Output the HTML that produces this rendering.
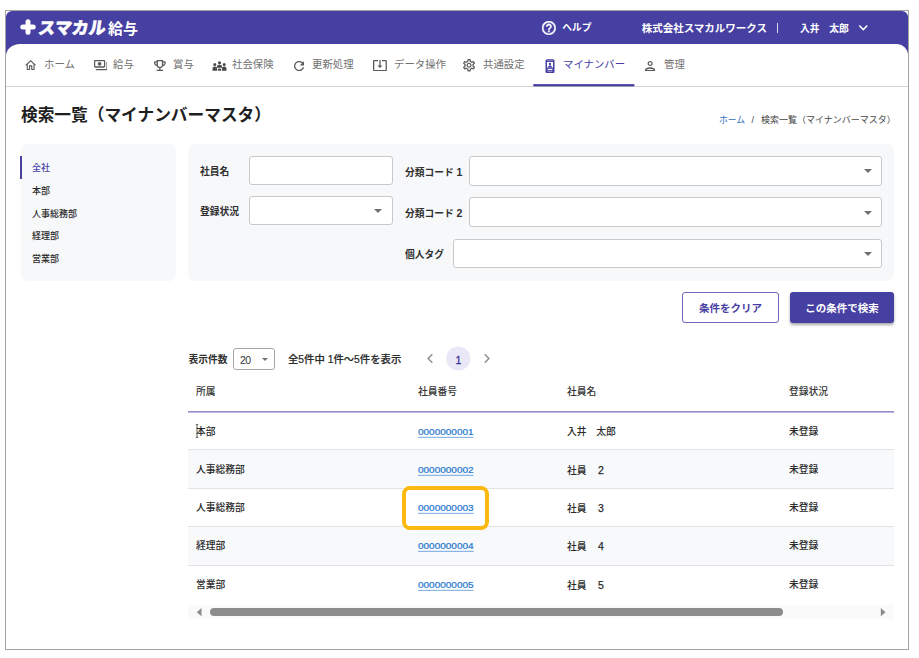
<!DOCTYPE html>
<html lang="ja">
<head>
<meta charset="utf-8">
<title>検索一覧（マイナンバーマスタ）</title>
<style>
*{box-sizing:border-box;margin:0;padding:0}
html,body{width:919px;height:658px;background:#fff;overflow:hidden}
body{font-family:"Liberation Sans","Noto Sans CJK JP",sans-serif;color:#222;position:relative}
.abs{position:absolute}
#frame{position:absolute;left:5px;top:10px;width:904px;height:640px;border:1px solid #a3a3a3;background:#fff;overflow:hidden}
/* coordinates inside #app are page coordinates */
#app{position:absolute;left:-6px;top:-11px;width:919px;height:658px}
#hdr{position:absolute;left:6px;top:11px;width:902px;height:60px;background:#4740a3;border-radius:6px 6px 0 0}
#content{position:absolute;left:6px;top:44px;width:902px;height:606px;background:#fff;border-radius:14px 12px 0 0 / 12px 11px 0 0}
.t{position:absolute;white-space:nowrap;line-height:1}
.hw{color:#fff;font-weight:700;font-size:10.5px}
#logo1{left:37.400px;top:19.500px;font-size:17px;font-weight:900;color:#fff;transform:skewX(-8deg);transform-origin:0 100%;-webkit-text-stroke:.5px #fff;letter-spacing:0px}
#logo2{left:108px;top:20.5px;font-size:15px;font-weight:700;color:#fff}
.nav{color:#707070;font-size:10.400px;top:60.300px}
.nav.act{color:#4740a3}
#navline{position:absolute;left:6px;top:86px;width:902px;height:1px;background:#d6d6d6}
#title{left:21px;top:108px;font-size:16.7px;font-weight:700;color:#1f1f1f}
.bc{font-size:9px;top:115.500px;color:#444}
.panel{position:absolute;background:#f7f8fa;border-radius:7px}
.side{font-size:9px;font-weight:500;left:32px;color:#2a2a2a}
.lbl{font-size:9.75px;font-weight:700;color:#303030;margin-top:.7px}
.dg{font-size:10.5px}
.dg2{margin-left:1.800px;font-size:10.500px;font-weight:400;-webkit-text-stroke:.25px #2a2a2a}
.inp{position:absolute;background:#fff;border:1px solid #c9c9c9;border-radius:3px}
.arrow{position:absolute;width:0;height:0;border-left:4px solid transparent;border-right:4px solid transparent;border-top:4px solid #707070}
.btn{position:absolute;border-radius:3px;font-size:10.5px;font-weight:700;text-align:center;line-height:29px;height:31px;white-space:nowrap}
.th{font-size:9.75px;font-weight:500;color:#333;top:387px}
.td{font-size:9.75px;font-weight:500;color:#2a2a2a}
.lnk{font-size:10px;letter-spacing:0;color:#2878cf;-webkit-text-stroke:.25px #2878cf;text-decoration:underline;text-decoration-thickness:.8px;text-decoration-color:rgba(40,120,207,.7);text-underline-offset:1.800px;transform:scaleY(.9);transform-origin:0 85%}
.rowbg{position:absolute;left:188px;width:706px;background:#f8f9fb}
.rowln{position:absolute;left:188px;width:706px;height:1px;background:#e3e3e6}
</style>
</head>
<body>
<div id="frame"><div id="app">
  <div id="hdr"></div>
  <div id="content"></div>

  <!-- header -->
  <svg class="abs" style="left:19.800px;top:19.200px" width="16" height="16" viewBox="0 0 16 16"><path d="M8 2.8v10.4M2.8 8h10.4" stroke="#fff" stroke-width="5" stroke-linecap="round" fill="none"/></svg>
  <div class="t" id="logo1">スマカル</div>
  <div class="t" id="logo2">給与</div>
  <svg class="abs" style="left:542.100px;top:20.900px" width="13.800" height="13.800" viewBox="2 2 20 20"><path d="M11 18h2v-2h-2v2zm1-16C6.48 2 2 6.48 2 12s4.48 10 10 10 10-4.48 10-10S17.52 2 12 2zm0 18c-4.41 0-8-3.59-8-8s3.59-8 8-8 8 3.59 8 8-3.59 8-8 8zm0-14c-2.21 0-4 1.79-4 4h2c0-1.1.9-2 2-2s2 .9 2 2c0 2-3 1.75-3 5h2c0-2.250 3-2.500 3-5 0-2.210-1.790-4-4-4z" fill="#fff" stroke="#fff" stroke-width=".6"/></svg>
  <div class="t hw" style="left:562.300px;top:23.300px;font-size:9.750px">ヘルプ</div>
  <div class="t hw" style="left:641.7px;top:23.3px">株式会社スマカルワークス</div>
  <div class="abs" style="left:777px;top:23px;width:1px;height:10px;background:#d9d7ef"></div>
  <div class="t hw" style="left:800px;top:23.6px;font-size:9.75px">入井&#12288;太郎</div>
  <svg class="abs" style="left:858px;top:24px" width="11" height="8" viewBox="0 0 11 8"><path d="M1.300 1.500L5.300 5.600 9.300 1.500" stroke="#fff" stroke-width="1.500" fill="none"/></svg>

  <!-- nav -->
  <!--i:home--><svg class="abs" style="left:25.4px;top:60.4px" width="11.3" height="10.1" viewBox="2 3 20 17" preserveAspectRatio="none"><path d="M12 5.69l5 4.5V18h-2v-6H9v6H7v-7.81l5-4.5M12 3L2 12h3v8h6v-6h2v6h6v-8h3L12 3z" fill="#5a5a5a"/></svg><!--/i:home-->
  <div class="t nav" style="left:44px">ホーム</div>
  <!--i:pay--><svg class="abs" style="left:93.5px;top:60.4px" width="13.7" height="10.2" viewBox="1 4 22 16" preserveAspectRatio="none"><path d="M19 14V6c0-1.1-.9-2-2-2H3c-1.1 0-2 .9-2 2v8c0 1.1.9 2 2 2h14c1.1 0 2-.9 2-2zm-2 0H3V6h14v8zm-7-7c-1.66 0-3 1.34-3 3s1.34 3 3 3 3-1.34 3-3-1.34-3-3-3zm13 0v11c0 1.1-.9 2-2 2H4v-2h17V7h2z" fill="#5a5a5a"/></svg><!--/i:pay-->
  <div class="t nav" style="left:113px">給与</div>
  <!--i:trophy--><svg class="abs" style="left:154.0px;top:60.0px" width="11.8" height="11.1" viewBox="3 3 18 18" preserveAspectRatio="none"><path d="M19 5h-2V3H7v2H5c-1.1 0-2 .9-2 2v1c0 2.55 1.92 4.63 4.39 4.94.63 1.5 1.98 2.63 3.61 2.96V19H7v2h10v-2h-4v-3.1c1.63-.33 2.98-1.46 3.61-2.96C19.08 12.63 21 10.55 21 8V7c0-1.1-.9-2-2-2zM5 8V7h2v3.82C5.84 10.4 5 9.3 5 8zm7 6c-1.65 0-3-1.35-3-3V5h6v6c0 1.65-1.35 3-3 3zm7-6c0 1.3-.84 2.4-2 2.820V7h2v1z" fill="#5a5a5a"/></svg><!--/i:trophy-->
  <div class="t nav" style="left:173px">賞与</div>
  <svg class="abs" style="left:211.500px;top:60.500px" width="15" height="10" viewBox="0 0 15 10"><g fill="#4a4a4a"><circle cx="2.800" cy="3.600" r="1.500"/><circle cx="7.500" cy="1.800" r="1.600"/><circle cx="12.200" cy="3.600" r="1.500"/><path d="M.5 9.800V7.600c0-1.300 1-2 2.300-2s2.300.7 2.300 2v2.200zM9.900 9.800V7.600c0-1.300 1-2 2.300-2s2.300.7 2.300 2v2.200zM4.900 6.800V5.700c0-1.200 1.100-1.900 2.600-1.900s2.600.7 2.600 1.900v1.100zM5.900 9.800V8.600c0-.8.700-1.200 1.600-1.200s1.600.4 1.600 1.200v1.200z"/></g></svg>
  <div class="t nav" style="left:232px">社会保険</div>
  <!--i:refresh--><svg class="abs" style="left:293.8px;top:60.5px" width="10.3" height="10.2" viewBox="4 4 16 16" preserveAspectRatio="none"><path d="M17.65 6.35C16.2 4.9 14.21 4 12 4c-4.42 0-7.99 3.58-7.990 8s3.570 8 7.990 8c3.730 0 6.840-2.550 7.730-6h-2.080c-.820 2.330-3.040 4-5.650 4-3.310 0-6-2.690-6-6s2.690-6 6-6c1.660 0 3.140.690 4.220 1.780L13 11h7V4l-2.350 2.350z" fill="#5a5a5a"/></svg><!--/i:refresh-->
  <div class="t nav" style="left:312px">更新処理</div>
  <!--i:sysupd--><svg class="abs" style="left:372.7px;top:59.9px" width="13.9" height="11.2" viewBox="1 3.5 22 18" preserveAspectRatio="none"><path d="M12 16.5l4-4h-3v-9h-2v9H8l4 4zm9-13h-6v1.990h6v14.030H3V5.490h6V3.500H3c-1.100 0-2 .9-2 2v14c0 1.100.9 2 2 2h18c1.100 0 2-.9 2-2v-14c0-1.100-.9-2-2-2z" fill="#5a5a5a"/></svg><!--/i:sysupd-->
  <div class="t nav" style="left:394px">データ操作</div>
  <!--i:settings--><svg class="abs" style="left:463.2px;top:59.4px" width="12.1" height="12.5" viewBox="2.3 2 19.4 20" preserveAspectRatio="none"><path d="M19.43 12.98c.04-.32.07-.64.07-.98 0-.34-.03-.66-.07-.98l2.11-1.65c.19-.15.24-.42.12-.64l-2-3.46c-.09-.16-.26-.25-.44-.25-.06 0-.12.01-.17.03l-2.49 1c-.52-.4-1.08-.73-1.69-.98l-.38-2.65C14.46 2.18 14.25 2 14 2h-4c-.25 0-.46.18-.49.42l-.38 2.65c-.61.25-1.17.59-1.69.98l-2.49-1c-.06-.02-.12-.03-.18-.03-.17 0-.34.09-.43.25l-2 3.460c-.13.22-.07.49.12.64l2.11 1.650c-.04.320-.07.650-.07.980 0 .330.030.660.070.980l-2.110 1.650c-.19.150-.24.420-.12.640l2 3.460c.090.160.260.250.440.250.060 0 .120-.010.170-.030l2.490-1c.520.4 1.080.730 1.690.980l.380 2.650c.030.240.240.420.490.420h4c.250 0 .460-.180.490-.420l.380-2.650c.610-.250 1.170-.590 1.690-.980l2.490 1c.060.020.120.030.180.030.170 0 .340-.090.430-.250l2-3.460c.120-.220.070-.490-.120-.640l-2.110-1.650zm-1.980-1.710c.040.310.050.520.050.730 0 .210-.020.430-.050.730l-.140 1.130.890.700 1.080.840-.7 1.210-1.270-.510-1.040-.420-.9.680c-.430.320-.840.560-1.250.730l-1.060.430-.160 1.130-.2 1.350h-1.400l-.190-1.350-.160-1.130-1.060-.430c-.430-.180-.830-.410-1.230-.710l-.910-.7-1.060.430-1.270.510-.7-1.210 1.080-.840.890-.7-.140-1.130c-.030-.310-.050-.540-.050-.740s.020-.430.050-.730l.140-1.130-.890-.7-1.080-.840.7-1.210 1.270.510 1.040.420.9-.680c.430-.320.840-.560 1.250-.730l1.060-.430.160-1.130.2-1.350h1.390l.190 1.350.160 1.130 1.060.430c.430.180.830.410 1.230.710l.910.7 1.060-.430 1.270-.510.7 1.210-1.070.850-.890.7.140 1.130zM12 8c-2.210 0-4 1.790-4 4s1.790 4 4 4 4-1.790 4-4-1.790-4-4-4zm0 6c-1.100 0-2-.9-2-2s.9-2 2-2 2 .9 2 2-.9 2-2 2z" fill="#5a5a5a"/></svg><!--/i:settings-->
  <div class="t nav" style="left:483px">共通設定</div>
  <svg class="abs" style="left:545px;top:58.500px" width="10" height="14.500" viewBox="0 0 10 14.500"><rect x=".5" y=".2" width="9" height="14" rx="1.500" fill="#4740a3"/><rect x="2" y="1.500" width="6" height=".6" fill="#b9b6e0"/><rect x="2" y="3" width="6" height="5.600" fill="#fff"/><circle cx="5" cy="5" r="1.150" fill="#4740a3"/><path d="M2.900 8.600c0-1.500.9-2.100 2.100-2.100s2.100.6 2.100 2.100z" fill="#4740a3"/><rect x="2.600" y="9.900" width="4.800" height="1.200" fill="#fff"/><rect x="2.600" y="12" width="4.800" height=".7" fill="#b9b6e0"/></svg>
  <div class="t nav act" style="left:563px">マイナンバー</div>
  <!--i:person--><svg class="abs" style="left:645.0px;top:60.5px" width="10.3" height="10.2" viewBox="4 4 16 16" preserveAspectRatio="none"><path d="M12 6c1.1 0 2 .9 2 2s-.9 2-2 2-2-.9-2-2 .9-2 2-2m0 10c2.7 0 5.8 1.29 6 2H6c.23-.72 3.31-2 6-2m0-12C9.79 4 8 5.79 8 8s1.79 4 4 4 4-1.79 4-4-1.79-4-4-4zm0 10c-2.670 0-8 1.340-8 4v2h16v-2c0-2.660-5.330-4-8-4z" fill="#5a5a5a"/></svg><!--/i:person-->
  <div class="t nav" style="left:664px">管理</div>
  <div id="navline"></div>
  <svg class="abs" style="left:533px;top:82px" width="102" height="6"><rect x=".3" y="2.100" width="101.100" height="2.300" fill="#4740a3"/></svg>

  <!-- title / breadcrumb -->
  <div class="t" id="title">検索一覧（マイナンバーマスタ）</div>
  <div class="t bc" style="left:719px;color:#2f6fb7;font-size:8.800px">ホーム</div>
  <div class="t bc" style="left:751.500px">/</div>
  <div class="t bc" style="left:761px">検索一覧（マイナンバーマスタ）</div>

  <!-- sidebar -->
  <div class="panel" style="left:21px;top:144px;width:155px;height:137px"></div>
  <div class="abs" style="left:20px;top:156px;width:2px;height:23px;background:#4740a3"></div>
  <div class="t side" style="top:164px;color:#4740a3">全社</div>
  <div class="t side" style="top:186.800px">本部</div>
  <div class="t side" style="top:209.800px">人事総務部</div>
  <div class="t side" style="top:231.800px">経理部</div>
  <div class="t side" style="top:254.800px">営業部</div>

  <!-- filter panel -->
  <div class="panel" style="left:188px;top:144px;width:706px;height:137px"></div>
  <div class="t lbl" style="left:200px;top:166px">社員名</div>
  <div class="inp" style="left:249px;top:156px;width:144px;height:29px"></div>
  <div class="t lbl" style="left:200px;top:206px">登録状況</div>
  <div class="inp" style="left:249px;top:196px;width:144px;height:29px"></div>
  <div class="arrow" style="left:374px;top:209px"></div>
  <div class="t lbl" style="left:405px;top:166px">分類コード <span class="dg">1</span></div>
  <div class="inp" style="left:469px;top:156px;width:413px;height:30px"></div>
  <div class="arrow" style="left:864px;top:169px"></div>
  <div class="t lbl" style="left:405px;top:207.400px">分類コード <span class="dg">2</span></div>
  <div class="inp" style="left:469px;top:197px;width:413px;height:30px"></div>
  <div class="arrow" style="left:864px;top:211px"></div>
  <div class="t lbl" style="left:405px;top:249px">個人タグ</div>
  <div class="inp" style="left:453px;top:239px;width:429px;height:29px"></div>
  <div class="arrow" style="left:864px;top:252px"></div>

  <!-- buttons -->
  <div class="btn" style="left:682px;top:292px;width:97px;border:1px solid #6d68b8;color:#4740a3;background:#fff;line-height:30px">条件をクリア</div>
  <div class="btn" style="left:790px;top:292px;width:104px;background:#4740a3;color:#fff;line-height:32px;box-shadow:0 2px 3px rgba(0,0,0,.35)">この条件で検索</div>

  <!-- pager -->
  <div class="t" style="left:188.500px;top:354.700px;font-size:9.750px;font-weight:700;color:#303030">表示件数</div>
  <div class="inp" style="left:233px;top:348px;width:42px;height:22px;border-color:#a6a6a6"></div>
  <div class="t" style="left:240px;top:354.500px;font-size:10.500px;color:#333;letter-spacing:-.5px">20</div>
  <div class="arrow" style="left:262px;top:358px;border-left-width:3.500px;border-right-width:3.500px;border-top-width:3.700px"></div>
  <div class="t" style="left:288px;top:355px;font-size:10.350px;font-weight:500;color:#2a2a2a;-webkit-text-stroke:.2px #2a2a2a">全5件中 1件〜5件を表示</div>
  <svg class="abs" style="left:426px;top:353px" width="8" height="11" viewBox="0 0 8 11"><path d="M6.300 1.300L2.100 5.500l4.200 4.200" stroke="#909090" stroke-width="1.500" fill="none"/></svg>
  <svg class="abs" style="left:445px;top:345px" width="27" height="27"><circle cx="13.300" cy="13.500" r="12.100" fill="#eae8f6"/></svg>
  <div class="t" style="left:455.400px;top:355px;font-size:10.500px;font-weight:400;color:#3a3492;-webkit-text-stroke:.3px #3a3492">1</div>
  <svg class="abs" style="left:482.500px;top:353px" width="8" height="11" viewBox="0 0 8 11"><path d="M1.700 1.300l4.200 4.200-4.200 4.200" stroke="#909090" stroke-width="1.500" fill="none"/></svg>

  <!-- table -->
  <div class="t th" style="left:196px">所属</div>
  <div class="t th" style="left:418px">社員番号</div>
  <div class="t th" style="left:567px">社員名</div>
  <div class="t th" style="left:789px">登録状況</div>
  <svg class="abs" style="left:188px;top:410px" width="706" height="4"><rect x="0" y="1.200" width="706" height="1.300" fill="#7873c4"/></svg>

  <div class="rowbg" style="top:450px;height:38px"></div>
  <div class="rowbg" style="top:527px;height:38px"></div>
  <div class="rowln" style="top:449px"></div>
  <div class="rowln" style="top:488px"></div>
  <div class="rowln" style="top:526px"></div>
  <div class="rowln" style="top:565px"></div>

  <!-- highlight -->
  <div class="abs" style="left:402px;top:486px;width:87px;height:44px;border:4px solid #fcb912;border-radius:8px;background:#fff"></div>

  <div class="t td" style="left:196px;top:426.5px">本部</div>
  <div class="t lnk" style="left:418px;top:426.5px">0000000001</div>
  <div class="t td" style="left:567px;top:426.5px">入井&#12288;太郎</div>
  <div class="t td" style="left:789px;top:426.5px">未登録</div>

  <div class="t td" style="left:196px;top:464.9px">人事総務部</div>
  <div class="t lnk" style="left:418px;top:464.9px">0000000002</div>
  <div class="t td" style="left:567px;top:464.9px">社員&#12288;<span class="dg2">2</span></div>
  <div class="t td" style="left:789px;top:464.9px">未登録</div>

  <div class="t td" style="left:196px;top:502.9px">人事総務部</div>
  <div class="t lnk" style="left:418px;top:502.9px">0000000003</div>
  <div class="t td" style="left:567px;top:502.9px">社員&#12288;<span class="dg2">3</span></div>
  <div class="t td" style="left:789px;top:502.9px">未登録</div>

  <div class="t td" style="left:196px;top:541.4px">経理部</div>
  <div class="t lnk" style="left:418px;top:541.4px">0000000004</div>
  <div class="t td" style="left:567px;top:541.4px">社員&#12288;<span class="dg2">4</span></div>
  <div class="t td" style="left:789px;top:541.4px">未登録</div>

  <div class="t td" style="left:196px;top:579.6px">営業部</div>
  <div class="t lnk" style="left:418px;top:579.6px">0000000005</div>
  <div class="t td" style="left:567px;top:579.6px">社員&#12288;<span class="dg2">5</span></div>
  <div class="t td" style="left:789px;top:579.6px">未登録</div>

  <!-- text cursor -->
  <svg class="abs" style="left:194px;top:423px" width="6" height="16" viewBox="0 0 6 16"><path d="M1.700 1.300c.8 0 1.300.3 1.300.9v11.600c0 .6-.5.900-1.300.9M4.300 1.300c-.8 0-1.300.3-1.300.9M4.300 14.700c-.8 0-1.300-.3-1.300-.9" stroke="#333" stroke-width=".8" fill="none"/></svg>
  <!-- scrollbar -->
  <div class="abs" style="left:188px;top:605px;width:706px;height:14px;background:#fafafa"></div>
  <svg class="abs" style="left:196px;top:607px" width="7" height="10" viewBox="0 0 7 10"><path d="M5.500 1v8.300L.8 5.150z" fill="#8a8a8a"/></svg>
  <div class="abs" style="left:209.500px;top:608px;width:573px;height:8px;border-radius:4px;background:#8c8c8c"></div>
  <svg class="abs" style="left:880px;top:607px" width="7" height="10" viewBox="0 0 7 10"><path d="M.8 1v8.300L5.500 5.150z" fill="#8a8a8a"/></svg>
</div></div>
</body>
</html>
